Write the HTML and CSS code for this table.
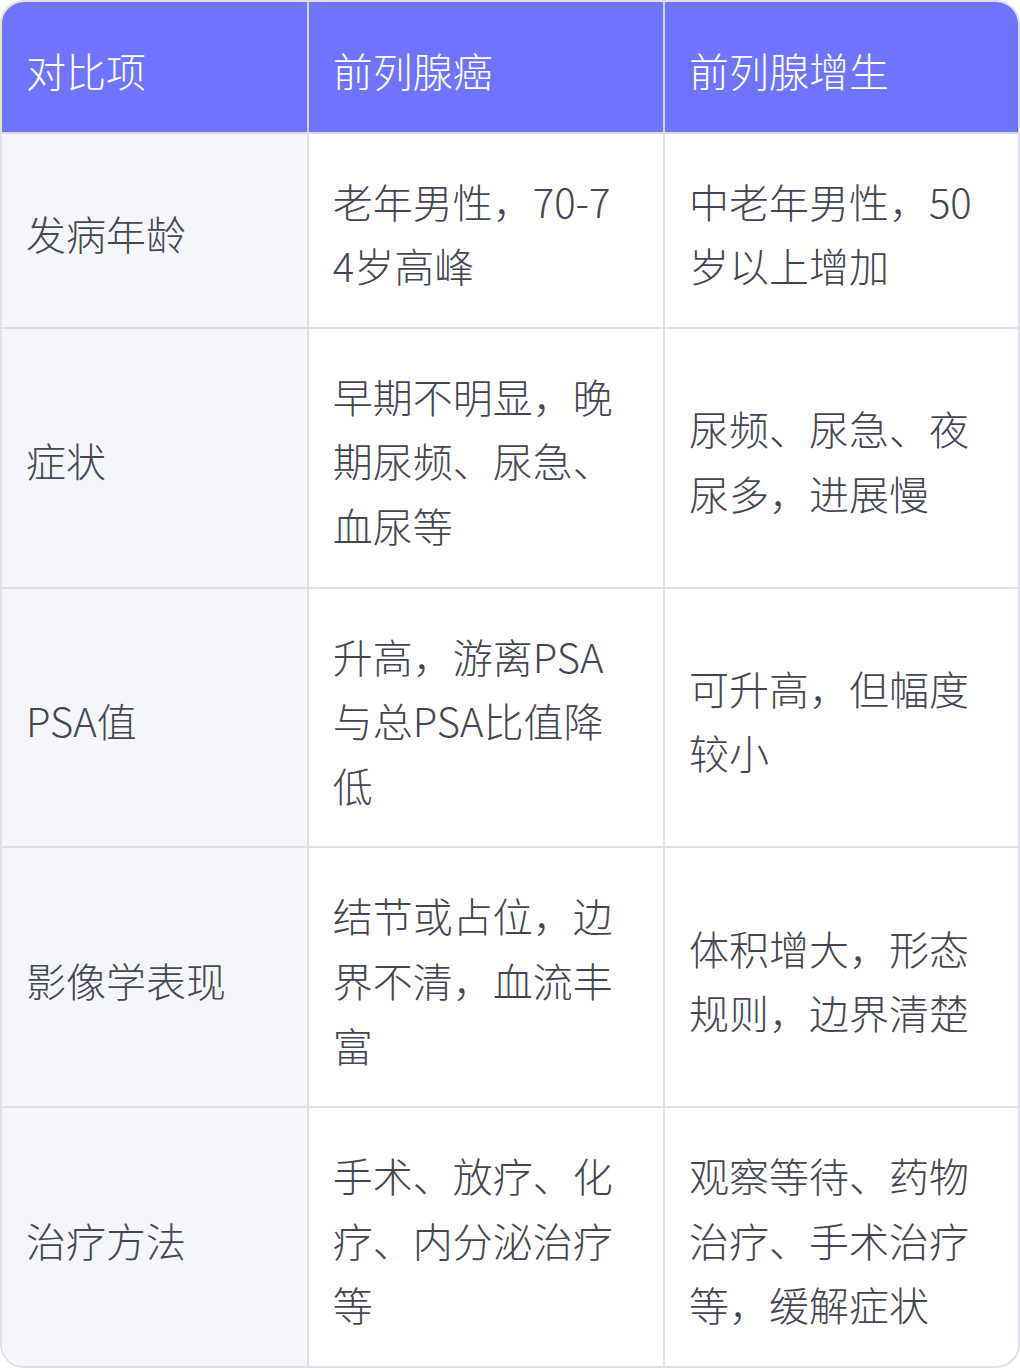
FILE: index.html
```html
<!DOCTYPE html>
<html lang="zh-CN">
<head>
<meta charset="utf-8">
<link rel="stylesheet" href="styles.css">
</head>
<body>
<div class="card">
<table class="cmp">
<colgroup><col class="c1"><col class="c2"><col class="c3"></colgroup>
<thead>
<tr><th>对比项</th><th>前列腺癌</th><th>前列腺增生</th></tr>
</thead>
<tbody>
<tr><td>发病年龄</td><td>老年男性，70-74岁高峰</td><td>中老年男性，50岁以上增加</td></tr>
<tr><td>症状</td><td>早期不明显，晚期尿频、尿急、血尿等</td><td>尿频、尿急、夜尿多，进展慢</td></tr>
<tr><td>PSA值</td><td>升高，游离PSA与总PSA比值降低</td><td>可升高，但幅度较小</td></tr>
<tr><td>影像学表现</td><td>结节或占位，边界不清，血流丰富</td><td>体积增大，形态规则，边界清楚</td></tr>
<tr><td>治疗方法</td><td>手术、放疗、化疗、内分泌治疗等</td><td>观察等待、药物治疗、手术治疗等，缓解症状</td></tr>
</tbody>
</table>
</div>
</body>
</html>
```
FILE: styles.css
```css
html, body {
  margin: 0;
  padding: 0;
  background: #ffffff;
}
.card {
  width: 1020px;
  height: 1368px;
  box-sizing: border-box;
  border: 2px solid #dfe0e5;
  border-radius: 24px;
  overflow: hidden;
  background: #ffffff;
}
.cmp {
  width: 100%;
  border-collapse: collapse;
  table-layout: fixed;
  font-family: "Noto Sans CJK SC", "Noto Sans", sans-serif;
  font-weight: 300;
  font-size: 40px;
  line-height: 64.6px;
  color: #444752;
}
.c1 { width: 30.1%; }
.c2 { width: 35.05%; }
.c3 { width: 34.85%; }
.cmp th, .cmp td {
  padding: 35px 38px 29px 24px;
  text-align: left;
  vertical-align: middle;
  word-break: break-all;
  border: 2px solid #dfe0e5;
}
.cmp tr:first-child th, .cmp tr:first-child td { border-top: none; }
.cmp th:first-child, .cmp td:first-child { border-left: none; }
.cmp th:last-child, .cmp td:last-child { border-right: none; }
.cmp tbody tr:last-child td { border-bottom: none; }
.cmp th {
  padding-top: 36px;
  padding-bottom: 29px;
  background: #6f74ff;
  color: #ffffff;
  font-weight: 300;
  border-color: #d3d5f2;
  border-bottom-color: #d6d8e6;
}
.cmp td:first-child {
  background: #f5f6fa;
}
```
